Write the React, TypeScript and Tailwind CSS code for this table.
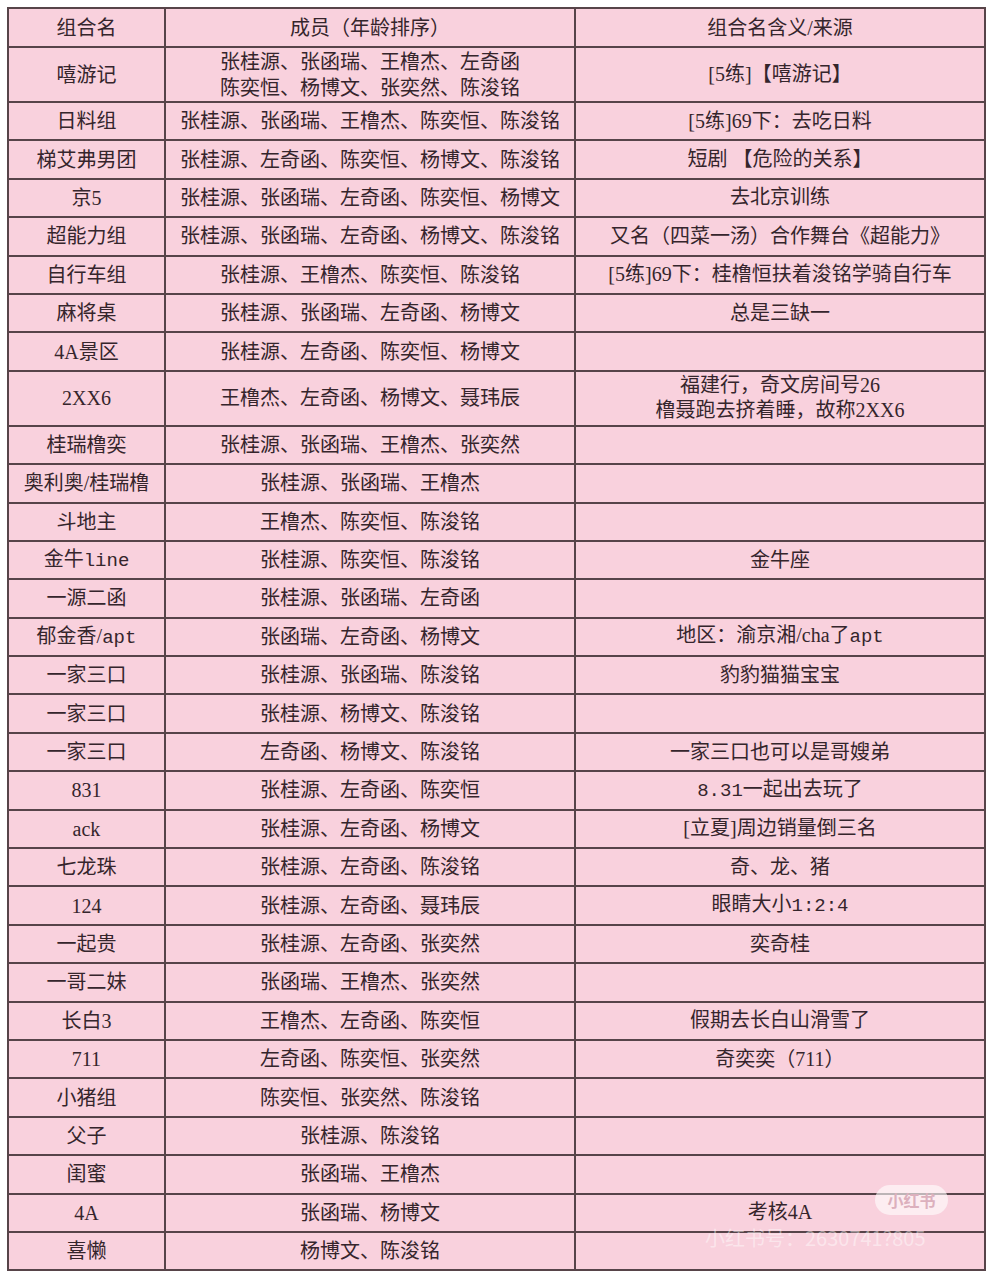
import React from 'react';

type Row = {
    name: React.ReactNode;
    members: string[];
    note?: React.ReactNode;
    tall?: boolean;
};

const mono = (s: string) => <span className="font-['Liberation_Mono','Noto_Sans_CJK_SC',monospace] text-[19px]">{s}</span>;

const rows: Row[] = [
    { name: '嘻游记', members: ['张桂源、张函瑞、王橹杰、左奇函', '陈奕恒、杨博文、张奕然、陈浚铭'], note: '[5练]【嘻游记】', tall: true },
    { name: '日料组', members: ['张桂源、张函瑞、王橹杰、陈奕恒、陈浚铭'], note: '[5练]69下：去吃日料' },
    { name: '梯艾弗男团', members: ['张桂源、左奇函、陈奕恒、杨博文、陈浚铭'], note: '短剧 【危险的关系】' },
    { name: '京5', members: ['张桂源、张函瑞、左奇函、陈奕恒、杨博文'], note: '去北京训练' },
    { name: '超能力组', members: ['张桂源、张函瑞、左奇函、杨博文、陈浚铭'], note: '又名（四菜一汤）合作舞台《超能力》' },
    { name: '自行车组', members: ['张桂源、王橹杰、陈奕恒、陈浚铭'], note: '[5练]69下：桂橹恒扶着浚铭学骑自行车' },
    { name: '麻将桌', members: ['张桂源、张函瑞、左奇函、杨博文'], note: '总是三缺一' },
    { name: '4A景区', members: ['张桂源、左奇函、陈奕恒、杨博文'] },
    { name: '2XX6', members: ['王橹杰、左奇函、杨博文、聂玮辰'], note: <>福建行，奇文房间号26<br />橹聂跑去挤着睡，故称2XX6</>, tall: true },
    { name: '桂瑞橹奕', members: ['张桂源、张函瑞、王橹杰、张奕然'] },
    { name: '奥利奥/桂瑞橹', members: ['张桂源、张函瑞、王橹杰'] },
    { name: '斗地主', members: ['王橹杰、陈奕恒、陈浚铭'] },
    { name: <>金牛{mono('line')}</>, members: ['张桂源、陈奕恒、陈浚铭'], note: '金牛座' },
    { name: '一源二函', members: ['张桂源、张函瑞、左奇函'] },
    { name: <>郁金香/{mono('apt')}</>, members: ['张函瑞、左奇函、杨博文'], note: <>地区：渝京湘/cha了{mono('apt')}</> },
    { name: '一家三口', members: ['张桂源、张函瑞、陈浚铭'], note: '豹豹猫猫宝宝' },
    { name: '一家三口', members: ['张桂源、杨博文、陈浚铭'] },
    { name: '一家三口', members: ['左奇函、杨博文、陈浚铭'], note: '一家三口也可以是哥嫂弟' },
    { name: '831', members: ['张桂源、左奇函、陈奕恒'], note: <>{mono('8.31')}一起出去玩了</> },
    { name: 'ack', members: ['张桂源、左奇函、杨博文'], note: '[立夏]周边销量倒三名' },
    { name: '七龙珠', members: ['张桂源、左奇函、陈浚铭'], note: '奇、龙、猪' },
    { name: '124', members: ['张桂源、左奇函、聂玮辰'], note: <>眼睛大小{mono('1:2:4')}</> },
    { name: '一起贵', members: ['张桂源、左奇函、张奕然'], note: '奕奇桂' },
    { name: '一哥二妹', members: ['张函瑞、王橹杰、张奕然'] },
    { name: '长白3', members: ['王橹杰、左奇函、陈奕恒'], note: '假期去长白山滑雪了' },
    { name: '711', members: ['左奇函、陈奕恒、张奕然'], note: '奇奕奕（711）' },
    { name: '小猪组', members: ['陈奕恒、张奕然、陈浚铭'] },
    { name: '父子', members: ['张桂源、陈浚铭'] },
    { name: '闺蜜', members: ['张函瑞、王橹杰'] },
    { name: '4A', members: ['张函瑞、杨博文'], note: '考核4A' },
    { name: '喜懒', members: ['杨博文、陈浚铭'] },
];

const cell = 'border-2 border-[#574449] text-center align-middle p-0';

export default function App() {
    return (
        <div className="relative w-[991px] h-[1280px] bg-white pt-[7px] pl-[7px] font-['Liberation_Serif','Noto_Sans_CJK_SC',serif] text-[20px] text-[#35252c]">
            <table className="w-[977px] table-fixed border-collapse bg-[#f9d1dd]">
                <colgroup>
                    <col className="w-[157px]" />
                    <col className="w-[410px]" />
                    <col className="w-[410px]" />
                </colgroup>
                <thead>
                    <tr className="h-[39px]">
                        <th className={`${cell} font-normal`}>组合名</th>
                        <th className={`${cell} font-normal`}>成员（年龄排序）</th>
                        <th className={`${cell} font-normal`}>组合名含义/来源</th>
                    </tr>
                </thead>
                <tbody>
                    {rows.map((r, i) => (
                        <tr key={i} className={r.tall ? 'h-[55px]' : 'h-[38.4px]'}>
                            <td className={cell}>{r.name}</td>
                            <td className={`${cell} leading-[26px]`}>
                                {r.members.map((m, j) => (
                                    <div key={j}>{m}</div>
                                ))}
                            </td>
                            <td className={`${cell} leading-[25px]`}>{r.note}</td>
                        </tr>
                    ))}
                </tbody>
            </table>

            {/* 小红书 watermark */}
            <div className="absolute left-[875px] top-[1185px] w-[73px] h-[30px] rounded-full bg-white/60 flex items-center justify-center">
                <span className="text-[16px] font-bold text-[#dcb0bd] font-['Noto_Sans_CJK_SC',sans-serif]">小红书</span>
            </div>
            <div className="absolute left-[705px] top-[1228px] text-[20px] leading-none text-white/45 font-['Noto_Sans_CJK_SC',sans-serif] whitespace-nowrap">
                小红书号：2630741?805
            </div>
        </div>
    );
}
